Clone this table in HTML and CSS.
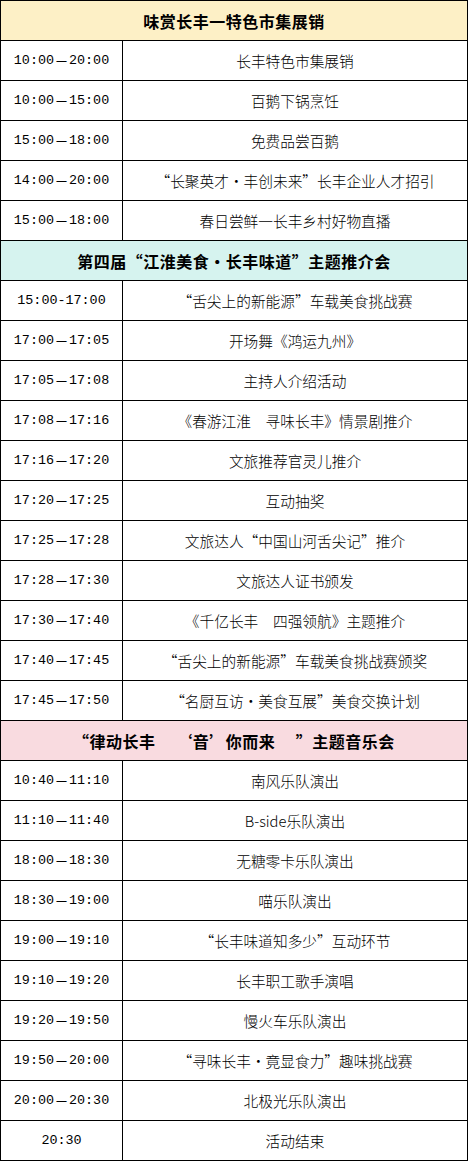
FILE: index.html
```html
<!DOCTYPE html>
<html lang="zh-CN">
<head>
<meta charset="utf-8">
<title>活动日程</title>
<link rel="stylesheet" href="styles.css">
</head>
<body>
<div class="schedule">
  <div class="head head-yellow">味赏长丰一特色市集展销</div>
  <div class="time">10:00<span class="dash">一</span>20:00</div><div class="item">长丰特色市集展销</div>
  <div class="time">10:00<span class="dash">一</span>15:00</div><div class="item">百鹅下锅烹饪</div>
  <div class="time">15:00<span class="dash">一</span>18:00</div><div class="item">免费品尝百鹅</div>
  <div class="time">14:00<span class="dash">一</span>20:00</div><div class="item">“长聚英才·丰创未来”长丰企业人才招引</div>
  <div class="time">15:00<span class="dash">一</span>18:00</div><div class="item">春日尝鲜一长丰乡村好物直播</div>

  <div class="head head-cyan">第四届“江淮美食·长丰味道”主题推介会</div>
  <div class="time">15:00-17:00</div><div class="item">“舌尖上的新能源”车载美食挑战赛</div>
  <div class="time">17:00<span class="dash">一</span>17:05</div><div class="item">开场舞《鸿运九州》</div>
  <div class="time">17:05<span class="dash">一</span>17:08</div><div class="item">主持人介绍活动</div>
  <div class="time">17:08<span class="dash">一</span>17:16</div><div class="item">《春游江淮　寻味长丰》情景剧推介</div>
  <div class="time">17:16<span class="dash">一</span>17:20</div><div class="item">文旅推荐官灵儿推介</div>
  <div class="time">17:20<span class="dash">一</span>17:25</div><div class="item">互动抽奖</div>
  <div class="time">17:25<span class="dash">一</span>17:28</div><div class="item">文旅达人“中国山河舌尖记”推介</div>
  <div class="time">17:28<span class="dash">一</span>17:30</div><div class="item">文旅达人证书颁发</div>
  <div class="time">17:30<span class="dash">一</span>17:40</div><div class="item">《千亿长丰　四强领航》主题推介</div>
  <div class="time">17:40<span class="dash">一</span>17:45</div><div class="item">“舌尖上的新能源”车载美食挑战赛颁奖</div>
  <div class="time">17:45<span class="dash">一</span>17:50</div><div class="item">“名厨互访·美食互展”美食交换计划</div>

  <div class="head head-pink">“律动长丰　 ‘音’你而来　 ”主题音乐会</div>
  <div class="time">10:40<span class="dash">一</span>11:10</div><div class="item">南风乐队演出</div>
  <div class="time">11:10<span class="dash">一</span>11:40</div><div class="item">B-side乐队演出</div>
  <div class="time">18:00<span class="dash">一</span>18:30</div><div class="item">无糖零卡乐队演出</div>
  <div class="time">18:30<span class="dash">一</span>19:00</div><div class="item">喵乐队演出</div>
  <div class="time">19:00<span class="dash">一</span>19:10</div><div class="item">“长丰味道知多少”互动环节</div>
  <div class="time">19:10<span class="dash">一</span>19:20</div><div class="item">长丰职工歌手演唱</div>
  <div class="time">19:20<span class="dash">一</span>19:50</div><div class="item">慢火车乐队演出</div>
  <div class="time">19:50<span class="dash">一</span>20:00</div><div class="item">“寻味长丰·竟显食力”趣味挑战赛</div>
  <div class="time">20:00<span class="dash">一</span>20:30</div><div class="item">北极光乐队演出</div>
  <div class="time">20:30</div><div class="item">活动结束</div>
</div>
</body>
</html>
```

FILE: styles.css
```css
html, body {
  margin: 0;
  padding: 0;
  background: #ffffff;
}

.schedule {
  display: grid;
  grid-template-columns: 122px 345px;
  grid-auto-rows: 40px;
  width: 468px;
  box-sizing: border-box;
  border-top: 1px solid #000;
  border-left: 1px solid #000;
  color: #000;
  font-family: "Noto Sans CJK SC", "Liberation Sans", sans-serif;
}

.schedule > div {
  box-sizing: border-box;
  border-right: 1px solid #000;
  border-bottom: 1px solid #000;
  display: flex;
  align-items: center;
  justify-content: center;
  white-space: pre;
}

.head {
  grid-column: 1 / span 2;
  font-size: 16px;
  font-weight: 700;
  letter-spacing: 0.5px;
}

.head-yellow { background: #fdf0c6; }
.head-cyan { background: #d6f3ef; }
.head-pink { background: #f9dbe0; }

.time {
  font-family: "Liberation Mono", "DejaVu Sans Mono", monospace;
  font-size: 13.4px;
}

.dash {
  font-family: "Noto Sans CJK SC", sans-serif;
  font-size: 11px;
  font-weight: 400;
  padding: 0 2px;
}

.item {
  font-size: 14.7px;
  font-weight: 300;
}
```
